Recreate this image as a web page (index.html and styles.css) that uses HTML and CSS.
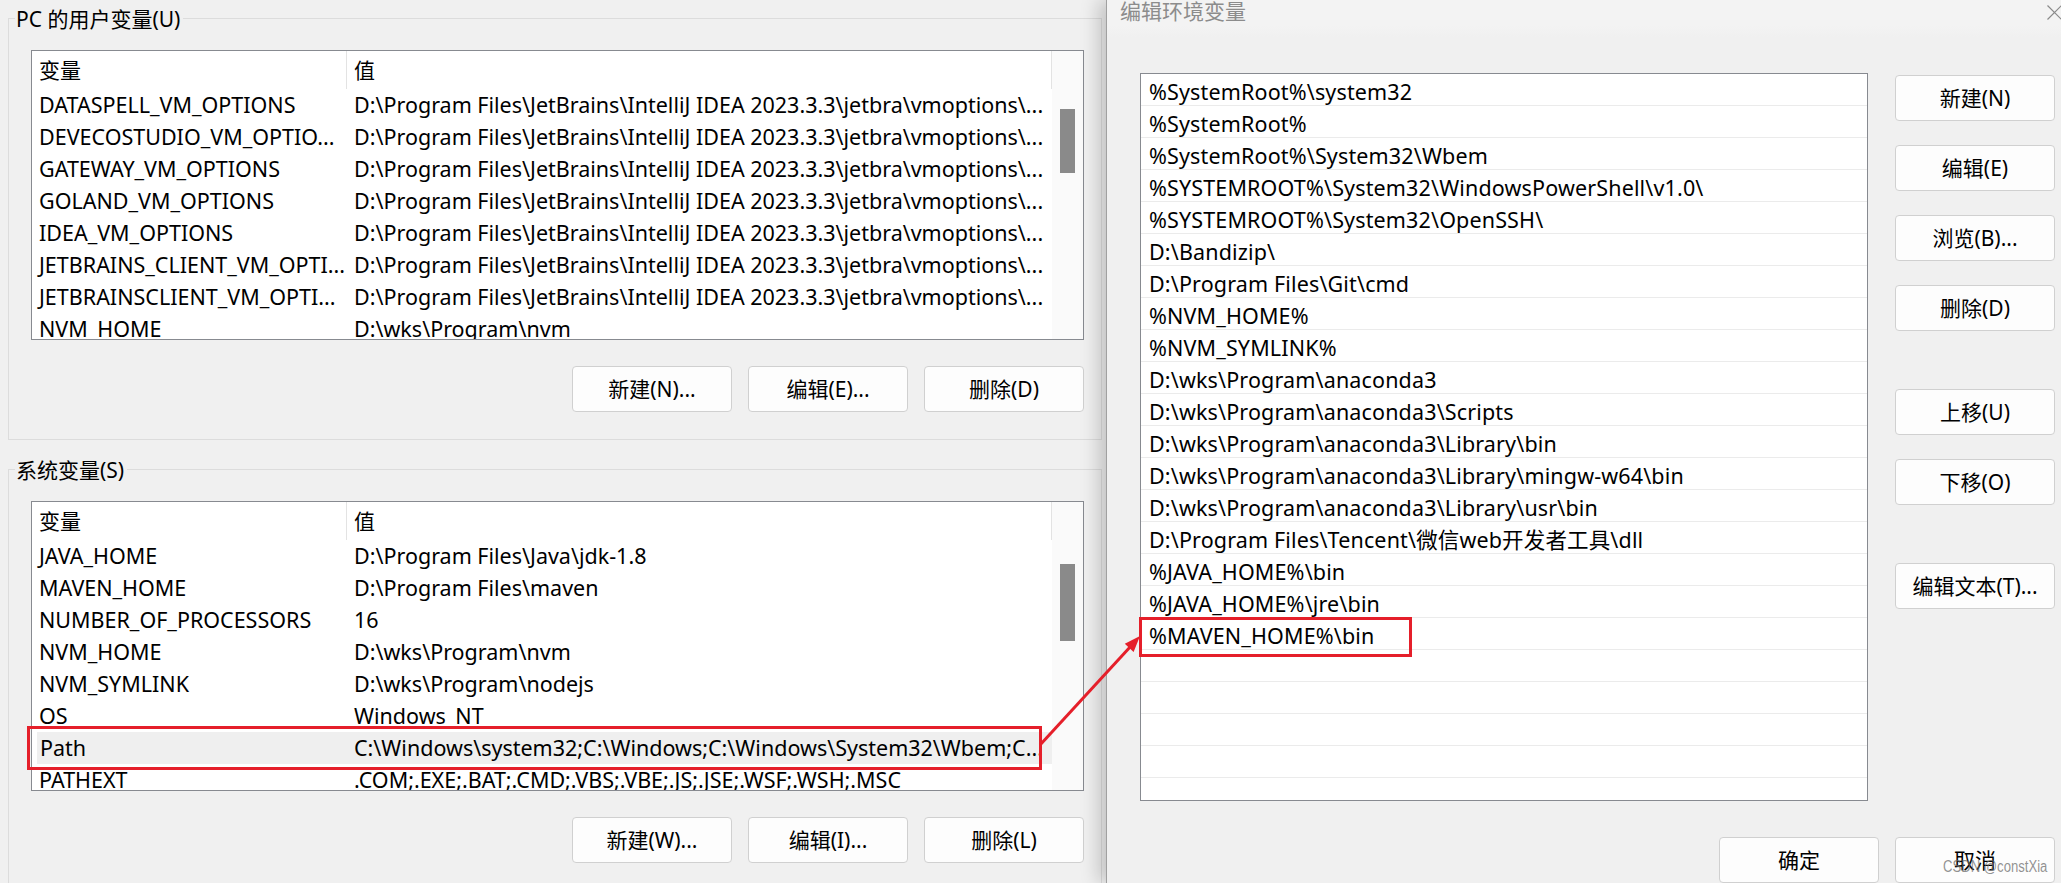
FILE: index.html
```html
<!DOCTYPE html>
<html lang="zh-CN">
<head>
<meta charset="utf-8">
<title>环境变量</title>
<link rel="stylesheet" href="styles.css">
</head>
<body>
<div class="screen">
  <section class="envwin">
    <div class="group">
      <div class="group-head"><span class="group-title">PC 的用户变量(U)</span></div>
      <div class="group-body">
        <div class="listview">
          <div class="lv-main">
            <div class="lv-head"><div class="c1">变量</div><div class="c2">值</div></div>
            <div class="lv-row"><div class="c1">DATASPELL_VM_OPTIONS</div><div class="c2">D:\Program Files\JetBrains\IntelliJ IDEA 2023.3.3\jetbra\vmoptions\...</div></div>
            <div class="lv-row"><div class="c1">DEVECOSTUDIO_VM_OPTIO...</div><div class="c2">D:\Program Files\JetBrains\IntelliJ IDEA 2023.3.3\jetbra\vmoptions\...</div></div>
            <div class="lv-row"><div class="c1">GATEWAY_VM_OPTIONS</div><div class="c2">D:\Program Files\JetBrains\IntelliJ IDEA 2023.3.3\jetbra\vmoptions\...</div></div>
            <div class="lv-row"><div class="c1">GOLAND_VM_OPTIONS</div><div class="c2">D:\Program Files\JetBrains\IntelliJ IDEA 2023.3.3\jetbra\vmoptions\...</div></div>
            <div class="lv-row"><div class="c1">IDEA_VM_OPTIONS</div><div class="c2">D:\Program Files\JetBrains\IntelliJ IDEA 2023.3.3\jetbra\vmoptions\...</div></div>
            <div class="lv-row"><div class="c1">JETBRAINS_CLIENT_VM_OPTI...</div><div class="c2">D:\Program Files\JetBrains\IntelliJ IDEA 2023.3.3\jetbra\vmoptions\...</div></div>
            <div class="lv-row"><div class="c1">JETBRAINSCLIENT_VM_OPTI...</div><div class="c2">D:\Program Files\JetBrains\IntelliJ IDEA 2023.3.3\jetbra\vmoptions\...</div></div>
            <div class="lv-row"><div class="c1">NVM_HOME</div><div class="c2">D:\wks\Program\nvm</div></div>
          </div>
          <div class="lv-scroll"><div class="thumb thumb-user"></div></div>
        </div>
        <div class="btnrow">
          <button class="btn">新建(N)...</button>
          <button class="btn">编辑(E)...</button>
          <button class="btn">删除(D)</button>
        </div>
      </div>
    </div>

    <div class="group group-sys">
      <div class="group-head"><span class="group-title">系统变量(S)</span></div>
      <div class="group-body">
        <div class="listview">
          <div class="lv-main">
            <div class="lv-head"><div class="c1">变量</div><div class="c2">值</div></div>
            <div class="lv-row"><div class="c1">JAVA_HOME</div><div class="c2">D:\Program Files\Java\jdk-1.8</div></div>
            <div class="lv-row"><div class="c1">MAVEN_HOME</div><div class="c2">D:\Program Files\maven</div></div>
            <div class="lv-row"><div class="c1">NUMBER_OF_PROCESSORS</div><div class="c2">16</div></div>
            <div class="lv-row"><div class="c1">NVM_HOME</div><div class="c2">D:\wks\Program\nvm</div></div>
            <div class="lv-row"><div class="c1">NVM_SYMLINK</div><div class="c2">D:\wks\Program\nodejs</div></div>
            <div class="lv-row"><div class="c1">OS</div><div class="c2">Windows_NT</div></div>
            <div class="lv-row sel"><div class="c1">Path</div><div class="c2">C:\Windows\system32;C:\Windows;C:\Windows\System32\Wbem;C...</div></div>
            <div class="lv-row"><div class="c1">PATHEXT</div><div class="c2">.COM;.EXE;.BAT;.CMD;.VBS;.VBE;.JS;.JSE;.WSF;.WSH;.MSC</div></div>
          </div>
          <div class="lv-scroll"><div class="thumb thumb-sys"></div></div>
        </div>
        <div class="btnrow">
          <button class="btn">新建(W)...</button>
          <button class="btn">编辑(I)...</button>
          <button class="btn">删除(L)</button>
        </div>
      </div>
    </div>
  </section>

  <section class="dialog">
    <div class="dlg-title">
      <span class="dlg-caption">编辑环境变量</span>
      <svg class="close" width="15" height="15" viewBox="0 0 15 15"><path d="M0.5 0.5 L14.5 14.5 M14.5 0.5 L0.5 14.5" stroke="#8a8a8a" stroke-width="1.2" fill="none"/></svg>
    </div>
    <div class="dlg-main">
      <div class="pathlist">
        <div class="pl-row">%SystemRoot%\system32</div>
        <div class="pl-row">%SystemRoot%</div>
        <div class="pl-row">%SystemRoot%\System32\Wbem</div>
        <div class="pl-row">%SYSTEMROOT%\System32\WindowsPowerShell\v1.0\</div>
        <div class="pl-row">%SYSTEMROOT%\System32\OpenSSH\</div>
        <div class="pl-row">D:\Bandizip\</div>
        <div class="pl-row">D:\Program Files\Git\cmd</div>
        <div class="pl-row">%NVM_HOME%</div>
        <div class="pl-row">%NVM_SYMLINK%</div>
        <div class="pl-row">D:\wks\Program\anaconda3</div>
        <div class="pl-row">D:\wks\Program\anaconda3\Scripts</div>
        <div class="pl-row">D:\wks\Program\anaconda3\Library\bin</div>
        <div class="pl-row">D:\wks\Program\anaconda3\Library\mingw-w64\bin</div>
        <div class="pl-row">D:\wks\Program\anaconda3\Library\usr\bin</div>
        <div class="pl-row">D:\Program Files\Tencent\微信web开发者工具\dll</div>
        <div class="pl-row">%JAVA_HOME%\bin</div>
        <div class="pl-row">%JAVA_HOME%\jre\bin</div>
        <div class="pl-row">%MAVEN_HOME%\bin</div>
        <div class="pl-row"></div>
        <div class="pl-row"></div>
        <div class="pl-row"></div>
        <div class="pl-row"></div>
        <div class="pl-row"></div>
      </div>
      <div class="dlg-side">
        <button class="btn">新建(N)</button>
        <button class="btn">编辑(E)</button>
        <button class="btn">浏览(B)...</button>
        <button class="btn">删除(D)</button>
        <button class="btn gap-lg">上移(U)</button>
        <button class="btn">下移(O)</button>
        <button class="btn gap-lg">编辑文本(T)...</button>
      </div>
    </div>
    <div class="dlg-foot">
      <button class="btn">确定</button>
      <button class="btn">取消</button>
    </div>
  </section>

  <svg class="annot" width="2061" height="883" viewBox="0 0 2061 883">
    <rect x="28.5" y="727.5" width="1012" height="41" fill="none" stroke="#e51f2a" stroke-width="3"/>
    <rect x="1140.5" y="618.5" width="270" height="37" fill="none" stroke="#e51f2a" stroke-width="3"/>
    <line x1="1040" y1="745" x2="1131" y2="646" stroke="#e51f2a" stroke-width="3"/>
    <polygon points="1140,636 1133.6,651.9 1124.8,643.7" fill="#e51f2a"/>
  </svg>
  <div class="watermark">CSDN @constXia</div>
</div>
</body>
</html>
```

FILE: styles.css
```css
* { box-sizing: border-box; margin: 0; padding: 0; }

html, body {
  width: 2061px;
  height: 883px;
  overflow: hidden;
}

body {
  background: #f0f0f0;
  font-family: "Noto Sans", "Noto Sans CJK SC", sans-serif;
  font-size: 21px;
  color: #000;
}

.screen {
  position: relative;
  display: flex;
  width: 2061px;
  height: 883px;
}

/* ---------- left window ---------- */
.envwin {
  width: 1106px;
  flex: none;
  padding: 8px 0 0 8px;
}

.group {
  width: 1094px;
}

.group-sys { margin-top: 19px; }

.group-head {
  display: flex;
  height: 22px;
}

.group-head::before,
.group-head::after {
  content: "";
  height: 11px;
  align-self: flex-end;
  border-top: 1px solid #dcdcdc;
}

.group-head::before {
  width: 6px;
  border-left: 1px solid #dcdcdc;
}

.group-head::after {
  flex: 1;
  border-right: 1px solid #dcdcdc;
}

.group-title {
  padding: 0 3px 0 1px;
  line-height: 22px;
  white-space: nowrap;
}

.group-body {
  border: 1px solid #dcdcdc;
  border-top: none;
  padding: 20px 0 27px 22px;
}

.listview {
  width: 1053px;
  height: 290px;
  border: 1px solid #878a90;
  background: #fff;
  display: flex;
  overflow: hidden;
}

.lv-main {
  flex: 1;
  min-width: 0;
  overflow: hidden;
}

.lv-head {
  display: flex;
  height: 38px;
  line-height: 38px;
}

.lv-row {
  display: flex;
  height: 32px;
  line-height: 32px;
  font-size: 21.5px;
}

.c1 {
  width: 315px;
  flex: none;
  padding-left: 7px;
  white-space: nowrap;
  overflow: hidden;
}

.c2 {
  flex: 1;
  min-width: 0;
  padding-left: 7px;
  white-space: nowrap;
  overflow: hidden;
}

.lv-head .c1 { border-right: 1px solid #e3e3e3; }
.lv-head .c2 { border-right: 1px solid #e3e3e3; }

.lv-row.sel {
  margin-left: 5px;
  background: #efefef;
}
.lv-row.sel .c1 {
  width: 310px;
  padding-left: 3px;
}

.lv-scroll {
  width: 31px;
  flex: none;
  background: #fafafa;
}

.thumb {
  margin-left: 8px;
  width: 15px;
  background: #8a8a8a;
}
.thumb-user { margin-top: 58px; height: 64px; }
.thumb-sys { margin-top: 62px; height: 77px; }

.btnrow {
  width: 1053px;
  margin-top: 26px;
  display: flex;
  justify-content: flex-end;
  gap: 16px;
}

.btn {
  font: inherit;
  color: #000;
  width: 160px;
  height: 46px;
  border: 1px solid #d0d0d0;
  border-radius: 4px;
  background: #fdfdfd;
  line-height: 1;
}

/* ---------- right dialog ---------- */
.dialog {
  flex: 1;
  position: relative;
  display: flex;
  flex-direction: column;
  border-left: 1px solid #a0a0a0;
  background: #f0f0f0;
  box-shadow: -7px 0 18px rgba(0, 0, 0, 0.2);
}

.dlg-title {
  height: 37px;
  display: flex;
  justify-content: space-between;
  padding-left: 13px;
  background: linear-gradient(#f3f3f3, #f3f3f3 70%, #f0f0f0);
}

.dlg-caption {
  color: #8c8c8c;
  line-height: 22px;
}

.close {
  margin-top: 5px;
  margin-right: -1px;
}

.dlg-main {
  display: flex;
  padding: 36px 0 0 33px;
}

.pathlist {
  width: 728px;
  height: 728px;
  border: 1px solid #878a90;
  background: #fff;
  overflow: hidden;
  flex: none;
}

.pl-row {
  height: 32px;
  padding: 4px 0 0 8px;
  line-height: 27px;
  font-size: 21.5px;
  letter-spacing: 0.15px;
  border-bottom: 1px solid #ebebeb;
  white-space: nowrap;
}

.dlg-side {
  margin-left: 27px;
  width: 160px;
  padding-top: 2px;
  display: flex;
  flex-direction: column;
  gap: 24px;
}

.gap-lg { margin-top: 34px; }

.dlg-foot {
  display: flex;
  justify-content: flex-end;
  gap: 16px;
  padding-right: 6px;
  margin-top: 36px;
}

/* ---------- annotations ---------- */
.annot {
  position: absolute;
  left: 0;
  top: 0;
  pointer-events: none;
}

.watermark {
  position: absolute;
  right: 14px;
  bottom: 7px;
  font-family: "Liberation Sans", sans-serif;
  font-size: 16px;
  color: rgba(110, 110, 110, 0.75);
  transform: scaleX(0.82);
  transform-origin: right center;
}
```
